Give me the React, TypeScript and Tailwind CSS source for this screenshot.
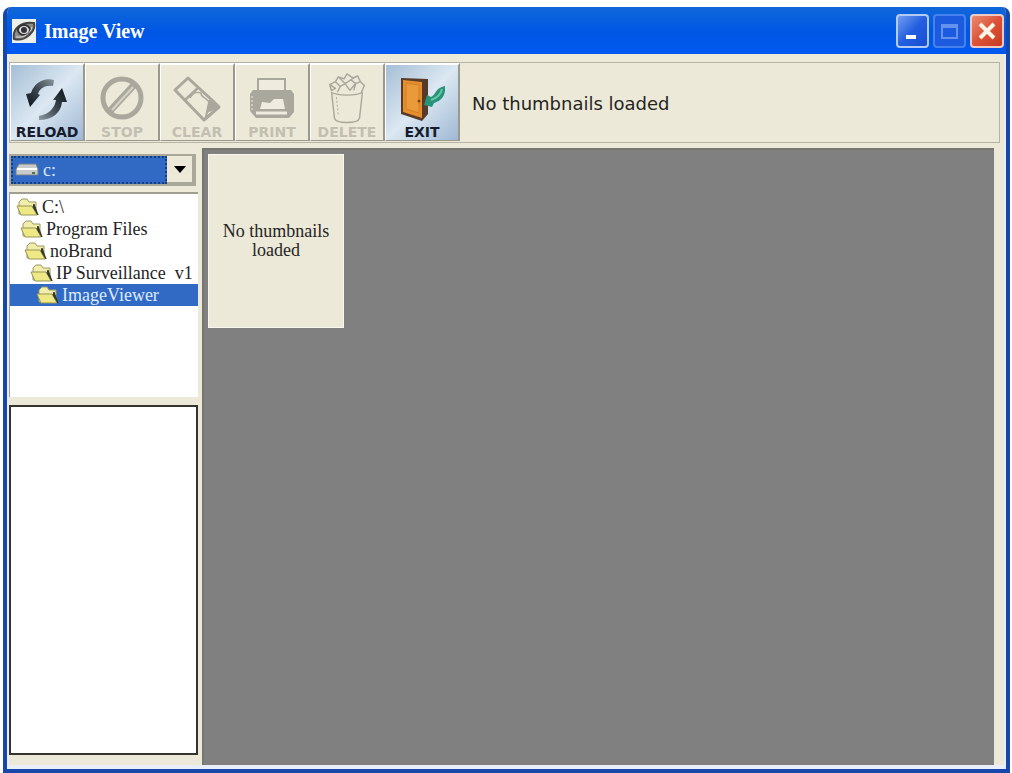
import { useState, type ReactNode } from 'react'

const folders = [
  { name: 'C:\\', indent: 'pl-1.5' },
  { name: 'Program Files', indent: 'pl-2.5' },
  { name: 'noBrand', indent: 'pl-3.5' },
  { name: 'IP Surveillance  v1', indent: 'pl-5' },
  { name: 'ImageViewer', indent: 'pl-6.5' },
]

function ReloadIcon() {
  return (
    <svg viewBox="0 0 44 46" className="h-[46px] w-[44px]">
      <defs>
        <linearGradient id="arrowDown" x1="0" y1="1" x2="1" y2="0">
          <stop offset="0" stopColor="#0c1118" />
          <stop offset="0.5" stopColor="#3a444d" />
          <stop offset="1" stopColor="#88939c" />
        </linearGradient>
        <linearGradient id="arrowUp" x1="0" y1="1" x2="1" y2="0">
          <stop offset="0" stopColor="#8f9aa3" />
          <stop offset="0.5" stopColor="#3a444d" />
          <stop offset="1" stopColor="#0c1118" />
        </linearGradient>
      </defs>
      <path d="M29 4C19 1 9 7 6 17L1 18L5 31L15 19L13 18C15 12 20 9 28 10Z" fill="url(#arrowDown)" />
      <path d="M14 44C27 44 36 37 37 26L42 26L37 12L28 24L31 24C30 31 25 38 14 40Z" fill="url(#arrowUp)" />
    </svg>
  )
}

function StopIcon() {
  return (
    <svg viewBox="0 0 44 46" className="h-[46px] w-[44px]" fill="none" stroke="#aaa79c">
      <circle cx="22" cy="22" r="19" strokeWidth="5" />
      <path d="M10 35L34 9" strokeWidth="7" />
      <path d="M12 34L33 11" stroke="#d6d3c6" strokeWidth="2" />
    </svg>
  )
}

function ClearIcon() {
  return (
    <svg viewBox="0 0 50 46" className="h-[46px] w-[50px]" fill="none" stroke="#aaa79c" strokeLinejoin="round">
      <path d="M3 14L16 2L41 25L47 31L32 44Z" strokeWidth="3" />
      <path d="M13 24L27 11" strokeWidth="2.5" />
      <path d="M37 24L47 31L36 36L33 43Z" fill="#aaa79c" strokeWidth="1" />
      <path d="M18 22C22 15 26 16 29 17C29 22 34 21 37 26" strokeWidth="1.5" />
    </svg>
  )
}

function PrintIcon() {
  return (
    <svg viewBox="0 0 46 46" className="h-[46px] w-[46px]">
      <path d="M9 15V3H36V15" fill="#efecdf" stroke="#aaa79c" strokeWidth="2" />
      <path d="M4 14H42L45 18V36L40 42H7L1 35V18Z" fill="#aaa79c" />
      <path d="M11 33L13 26L21 27L25 23H34L36 33Z" fill="#efecdf" />
      <path d="M7 37H38" stroke="#efecdf" strokeWidth="3" />
      <path d="M3 20V34" stroke="#efecdf" strokeWidth="1" strokeDasharray="2 2" />
    </svg>
  )
}

function DeleteIcon() {
  return (
    <svg viewBox="0 0 40 54" className="h-[52px] w-[40px]" fill="none" stroke="#aaa79c" strokeWidth="1.5" strokeLinejoin="round">
      <path d="M4 20L7 47C9 53 31 53 33 47L36 20" />
      <path d="M4 20C10 24 30 24 36 20" />
      <path d="M4 19L2 12L8 9L11 4L17 6L20 1L26 5L31 3L34 9L38 13L35 20M8 9L13 14L10 20M11 4L18 11L24 7L31 3M13 14L18 11L23 18L29 11L34 9M24 7L29 11L27 18M2 12L8 16L4 18" />
      <path d="M9 25L11 44" strokeWidth="1" strokeDasharray="2 2" />
    </svg>
  )
}

function ExitIcon() {
  return (
    <svg viewBox="0 0 46 46" className="h-[46px] w-[46px]">
      <path d="M2 2L29 3V38L23 45L2 38Z" fill="#573a28" />
      <path d="M4 4L23 6V42L4 36Z" fill="#e68e2b" />
      <path d="M7 7L20 9V37L7 33Z" fill="#eb9a3b" stroke="#d17e25" />
      <circle cx="20" cy="25" r="1.5" fill="#7b4519" />
      <path d="M46 10C47 20 42 25 35 27L33 31L25 29L28 19L32 21C37 19 36 12 46 10Z" fill="#279378" />
      <path d="M43 13C42 18 38 22 32 24" fill="none" stroke="#68c3a6" strokeWidth="2" />
    </svg>
  )
}

function FolderIcon() {
  return (
    <svg viewBox="0 0 24 19" className="h-[19px] w-[24px] shrink-0">
      <path d="M3 16V4L6 1H11L13 4H20V16Z" fill="#f3edaa" stroke="#9a9966" />
      <path d="M1 8H16L21 17H5Z" fill="#eee984" stroke="#96955b" />
      <path d="M18 6L22 17L17 9Z" fill="#333627" stroke="#333627" />
    </svg>
  )
}

interface ToolButtonProps {
  label: string
  icon: ReactNode
  disabled?: boolean
  onClick?: () => void
}

function ToolButton({ label, icon, disabled, onClick }: ToolButtonProps) {
  return (
    <button
      type="button"
      disabled={disabled}
      onClick={onClick}
      className={`flex h-full w-[75px] flex-col items-center justify-end border-t-2 border-r-2 border-b border-l border-t-white border-r-[#9b998e] border-b-[#9b998e] border-l-white font-['DejaVu_Sans',sans-serif] text-[14px] leading-4 font-bold ${
        disabled
          ? 'bg-[#ece9d8] text-[#c2bfb2]'
          : 'bg-linear-to-br from-[#a5bed5] via-[#dce8f2] to-[#9fb8d4] text-[#171c2c]'
      }`}
    >
      <span className="flex min-h-0 flex-1 items-center justify-center pt-2">{icon}</span>
      <span>{label}</span>
    </button>
  )
}

export default function App() {
  const [drive, setDrive] = useState('c:')
  const [selected, setSelected] = useState('ImageViewer')

  return (
    <div className="flex h-screen flex-col bg-white pt-[7px] pr-[2px] pl-[3px]">
      <div className="flex min-h-0 flex-1 flex-col overflow-hidden rounded-t-lg border-x-4 border-b-4 border-[#1847ac] bg-[#ece9d8]">
        <header className="flex h-[47px] shrink-0 items-center bg-linear-to-b from-[#1267d8] via-[#0057e5] to-[#0058f0] pr-[2px] pl-[5px]">
          <svg viewBox="0 0 24 24" className="h-6 w-6">
            <path d="M0 0H24V24H0Z" fill="#eeeeea" />
            <path d="M2 20C0 10 9 2 22 4C24 12 14 23 2 20Z" fill="#8e8c88" stroke="#444" strokeWidth="2" />
            <ellipse cx="12" cy="11" rx="6" ry="5" fill="#ddd" stroke="#333" strokeWidth="2" />
            <circle cx="12" cy="11" r="3" fill="#333" />
            <path d="M4 18C12 19 18 15 20 8" fill="none" stroke="#ddd" />
          </svg>
          <h1 className="flex-1 pl-2 font-['Liberation_Serif',serif] text-[20px] leading-6 font-bold text-white">
            Image View
          </h1>
          <div className="flex gap-1">
            <button type="button" aria-label="Minimize" className="h-[34px] w-[33px] rounded border-2 border-[#b1cbf5] bg-linear-to-br from-[#719cf0] via-[#245ee0] to-[#164ed1]">
              <svg viewBox="0 0 29 30" className="h-full w-full">
                <path d="M8 21H18" stroke="white" strokeWidth="4" />
              </svg>
            </button>
            <button type="button" aria-label="Maximize" disabled className="h-[34px] w-[33px] rounded border-2 border-[#4582ec] bg-[#1c5bdf]">
              <svg viewBox="0 0 29 30" className="h-full w-full">
                <path d="M7 9H22V22H7ZM7 11H22" fill="none" stroke="#6492ed" strokeWidth="2" />
              </svg>
            </button>
            <button type="button" aria-label="Close" className="h-[34px] w-[34px] rounded border-2 border-[#f0c9c3] bg-linear-to-br from-[#e98b71] via-[#dc5138] to-[#c63c20]">
              <svg viewBox="0 0 30 30" className="h-full w-full">
                <path d="M8 8L22 22M22 8L8 22" stroke="#fff4e5" strokeWidth="4" />
              </svg>
            </button>
          </div>
        </header>

        <main className="flex min-h-0 flex-1 flex-col border-x-2 border-b-4 border-[#e8effa] pt-2">
          <div className="mr-1 flex h-[81px] shrink-0 items-center border border-[#b5b3a3] pb-px">
            <ToolButton label="RELOAD" icon={<ReloadIcon />} onClick={() => setSelected('ImageViewer')} />
            <ToolButton label="STOP" icon={<StopIcon />} disabled />
            <ToolButton label="CLEAR" icon={<ClearIcon />} disabled />
            <ToolButton label="PRINT" icon={<PrintIcon />} disabled />
            <ToolButton label="DELETE" icon={<DeleteIcon />} disabled />
            <ToolButton label="EXIT" icon={<ExitIcon />} />
            <p className="pt-1 pl-3 font-['DejaVu_Sans',sans-serif] text-[18px] leading-6 text-[#25251f]">
              No thumbnails loaded
            </p>
          </div>

          <div className="flex min-h-0 flex-1 pt-[5px]">
            <aside className="flex w-[193px] shrink-0 flex-col pr-1">
              <div className="relative mt-[6px] mr-[2px] h-[32px] border-2 border-[#aaa899] bg-white">
                <select
                  aria-label="Drive"
                  value={drive}
                  onChange={(e) => setDrive(e.target.value)}
                  className="h-full w-full appearance-none bg-[#316ac5] pl-8 font-['Liberation_Serif',serif] text-[18px] leading-6 text-[#dbe8fb]"
                >
                  <option value="c:">c:</option>
                </select>
                <div className="pointer-events-none absolute inset-y-0 right-[27px] left-0 flex items-center border-2 border-dotted border-[#183d7c] pl-[2px]">
                  <svg viewBox="0 0 24 14" className="h-[14px] w-[24px]">
                    <path d="M4 1H21L23 6V12H1V6Z" fill="#c8cbca" stroke="#767f88" />
                    <path d="M2 6H22" stroke="white" strokeWidth="2" />
                    <path d="M17 10H20" stroke="#477c50" strokeWidth="2" />
                  </svg>
                </div>
                <div className="pointer-events-none absolute inset-y-0 right-0 flex w-[27px] items-center justify-center border-r-2 border-b-2 border-[#aaa899] bg-[#ece9d8]">
                  <svg viewBox="0 0 12 7" className="h-[7px] w-[12px]">
                    <path d="M0 0H12L6 7Z" fill="black" />
                  </svg>
                </div>
              </div>

              <ul className="mt-[6px] h-[205px] overflow-hidden border-t-2 border-l border-[#9f9e91] bg-white pt-[2px] font-['Liberation_Serif',serif] text-[18px] leading-[22px] text-[#25251f]">
                {folders.map((folder) => (
                  <li key={folder.name}>
                    <button
                      type="button"
                      onClick={() => setSelected(folder.name)}
                      className={`flex h-[22px] w-full items-center whitespace-pre ${folder.indent} ${
                        selected === folder.name ? 'bg-[#316ac5] text-[#dfebfb]' : ''
                      }`}
                    >
                      <FolderIcon />
                      <span className="pl-[2px]">{folder.name}</span>
                    </button>
                  </li>
                ))}
              </ul>

              {/* preview pane */}
              <div className="mt-2 mb-[10px] min-h-0 flex-1 border-2 border-[#34332f] bg-white" />
            </aside>

            <section className="mr-[10px] min-w-0 flex-1 border-t-2 border-l-2 border-[#77766f] bg-[#808080] p-1">
              <div className="flex h-[174px] w-[136px] items-center justify-center border border-[#f8f7ed] bg-[#ece9d8] px-2 text-center font-['Liberation_Serif',serif] text-[18px] leading-[19px] text-[#25251f]">
                No thumbnails loaded
              </div>
            </section>
          </div>
        </main>
      </div>
    </div>
  )
}
